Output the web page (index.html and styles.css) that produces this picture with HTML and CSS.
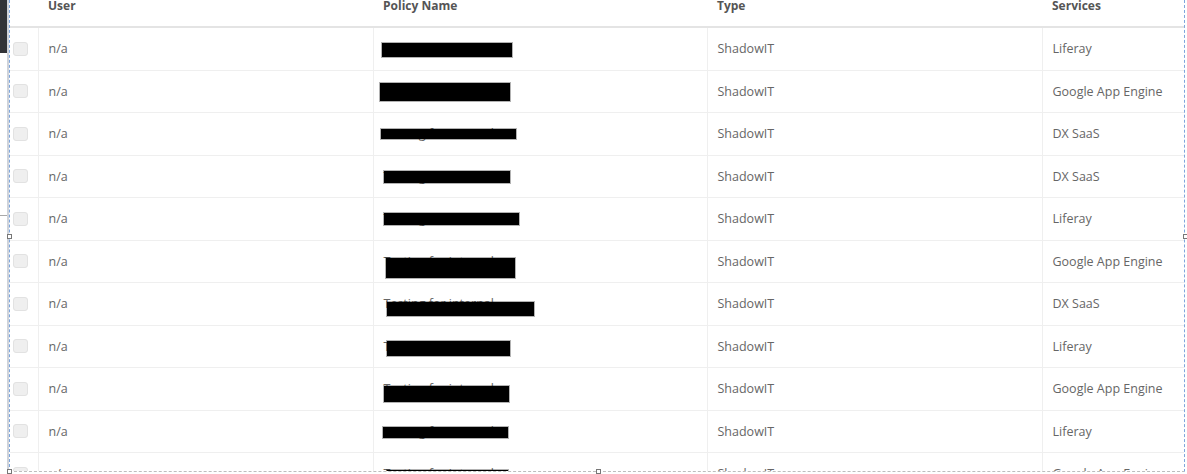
FILE: index.html
```html
<!DOCTYPE html>
<html lang="en">
<head>
    <meta charset="UTF-8">
    <meta name="viewport" content="width=device-width, initial-scale=1.0">
    <title>Policies</title>
    <link rel="stylesheet" href="styles.css">
</head>
<body>
    <div class="page">
        <div class="gutter">
            <div class="gutter-dark"></div>
            <div class="gutter-tick"></div>
        </div>
        <div class="frame">
            <span class="handle handle-left"></span>
            <span class="handle handle-right"></span>
            <span class="handle handle-bottom-left"></span>
            <span class="handle handle-bottom-mid"></span>
            <div class="viewport">
                <table class="policies">
                    <colgroup>
                        <col class="w-check">
                        <col class="w-user">
                        <col class="w-policy">
                        <col class="w-type">
                        <col class="w-services">
                    </colgroup>
                    <thead>
                        <tr>
                            <th></th>
                            <th>User</th>
                            <th>Policy Name</th>
                            <th>Type</th>
                            <th>Services</th>
                        </tr>
                    </thead>
                    <tbody>
                        <tr>
                            <td class="cell-check"><input type="checkbox" class="check"></td>
                            <td>n/a</td>
                            <td class="cell-policy">Testing for internal<span class="redact" style="left:8px;top:15px;width:130px;height:14px"></span></td>
                            <td>ShadowIT</td>
                            <td>Liferay</td>
                        </tr>
                        <tr>
                            <td class="cell-check"><input type="checkbox" class="check"></td>
                            <td>n/a</td>
                            <td class="cell-policy">Testing for internal<span class="redact" style="left:6px;top:12px;width:130px;height:18px"></span></td>
                            <td>ShadowIT</td>
                            <td>Google App Engine</td>
                        </tr>
                        <tr>
                            <td class="cell-check"><input type="checkbox" class="check"></td>
                            <td>n/a</td>
                            <td class="cell-policy">Testing for internal<span class="redact" style="left:7px;top:16px;width:135px;height:10px"></span></td>
                            <td>ShadowIT</td>
                            <td>DX SaaS</td>
                        </tr>
                        <tr>
                            <td class="cell-check"><input type="checkbox" class="check"></td>
                            <td>n/a</td>
                            <td class="cell-policy">Testing for internal<span class="redact" style="left:10px;top:15px;width:126px;height:12px"></span></td>
                            <td>ShadowIT</td>
                            <td>DX SaaS</td>
                        </tr>
                        <tr>
                            <td class="cell-check"><input type="checkbox" class="check"></td>
                            <td>n/a</td>
                            <td class="cell-policy">Testing for internal<span class="redact" style="left:10px;top:15px;width:135px;height:12px"></span></td>
                            <td>ShadowIT</td>
                            <td>Liferay</td>
                        </tr>
                        <tr>
                            <td class="cell-check"><input type="checkbox" class="check"></td>
                            <td>n/a</td>
                            <td class="cell-policy">Testing for internal<span class="redact" style="left:12px;top:17px;width:129px;height:20px"></span></td>
                            <td>ShadowIT</td>
                            <td>Google App Engine</td>
                        </tr>
                        <tr>
                            <td class="cell-check"><input type="checkbox" class="check"></td>
                            <td>n/a</td>
                            <td class="cell-policy">Testing for internal<span class="redact" style="left:13px;top:19px;width:147px;height:14px"></span></td>
                            <td>ShadowIT</td>
                            <td>DX SaaS</td>
                        </tr>
                        <tr>
                            <td class="cell-check"><input type="checkbox" class="check"></td>
                            <td>n/a</td>
                            <td class="cell-policy">Testing for internal<span class="redact" style="left:13px;top:15px;width:123px;height:15px"></span></td>
                            <td>ShadowIT</td>
                            <td>Liferay</td>
                        </tr>
                        <tr>
                            <td class="cell-check"><input type="checkbox" class="check"></td>
                            <td>n/a</td>
                            <td class="cell-policy">Testing for internal<span class="redact" style="left:10px;top:18px;width:125px;height:16px"></span></td>
                            <td>ShadowIT</td>
                            <td>Google App Engine</td>
                        </tr>
                        <tr>
                            <td class="cell-check"><input type="checkbox" class="check"></td>
                            <td>n/a</td>
                            <td class="cell-policy">Testing for internal<span class="redact" style="left:9px;top:16px;width:125px;height:11px"></span></td>
                            <td>ShadowIT</td>
                            <td>Liferay</td>
                        </tr>
                        <tr>
                            <td class="cell-check"><input type="checkbox" class="check"></td>
                            <td>n/a</td>
                            <td class="cell-policy">Testing for internal<span class="redact" style="left:13px;top:17px;width:121px;height:14px"></span></td>
                            <td>ShadowIT</td>
                            <td>Google App Engine</td>
                        </tr>
                    </tbody>
                </table>
            </div>
        </div>
    </div>
</body>
</html>
```

FILE: styles.css
```css
body {
    margin: 0;
    font-family: "Open Sans", "Liberation Sans", sans-serif;
    background: #fff;
}
.page {
    display: flex;
    height: 474px;
    overflow: hidden;
}
/* strip of the editor on the left */
.gutter {
    width: 7px;
    border-right: 2px solid #cfd3da;
    display: flex;
    flex-direction: column;
}
.gutter-dark {
    height: 53px;
    background: #313337;
}
.gutter-tick {
    margin-top: 162px;
    height: 1px;
    background: #a9a9a9;
}
.frame {
    position: relative;
    width: 1174px;
    height: 471px;
    border-left: 1px dashed #7ea6dc;
    border-right: 1px dashed #7ea6dc;
    border-bottom: 1px dashed #bdbdbd;
}
.viewport {
    height: 100%;
    overflow: hidden;
}
.handle {
    position: absolute;
    width: 3px;
    height: 3px;
    border: 1px solid #777;
    background: #fff;
    z-index: 2;
}
.handle-left { left: -3px; top: 234px; }
.handle-right { right: -4px; top: 234px; }
.handle-bottom-left { left: -3px; bottom: -3px; }
.handle-bottom-mid { left: 586px; bottom: -3px; }

.policies {
    width: 1174px;
    table-layout: fixed;
    border-collapse: collapse;
    margin-top: -15px;
    font-size: 12px;
}
.w-check { width: 28px; }
.w-user { width: 335px; }
.w-policy { width: 334px; }
.w-type { width: 335px; }
.w-services { width: 142px; }

.policies th {
    height: 41px;
    padding: 0 10px;
    text-align: left;
    font-weight: 700;
    color: #555;
    border-bottom: 2px solid #e4e4e4;
}
.policies td {
    height: 41.5px;
    padding: 0 10px;
    font-size: 12.5px;
    color: #666;
    border-bottom: 1px solid #efefef;
    white-space: nowrap;
}
.policies td + td {
    border-left: 1px solid #efefef;
}
.policies .cell-check {
    padding: 0 0 0 3px;
}
.check {
    appearance: none;
    display: block;
    margin: 0;
    width: 15px;
    height: 14px;
    border: 1px solid #e2e2e2;
    border-radius: 3px;
    background: #efefef;
}
.policies .cell-policy {
    position: relative;
    padding-left: 10px;
}
/* black marker over the policy names */
.redact {
    position: absolute;
    background: #000;
    box-shadow: 0 0 0 1px rgba(0, 0, 0, 0.3);
}
```
